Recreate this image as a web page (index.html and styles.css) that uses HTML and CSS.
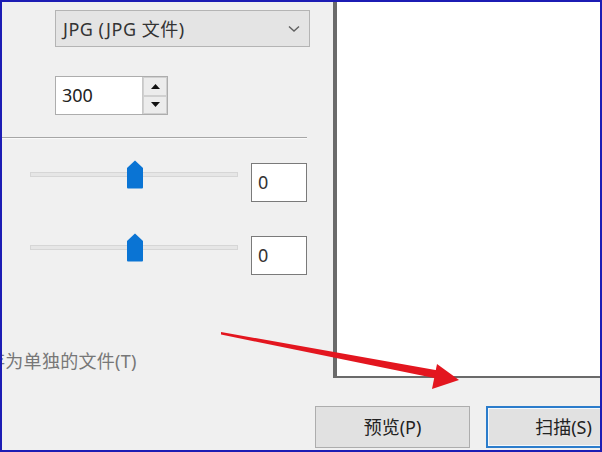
FILE: index.html
```html
<!DOCTYPE html>
<html lang="zh">
<head>
<meta charset="utf-8">
<title>扫描</title>
<link rel="stylesheet" href="styles.css">
</head>
<body>
<div class="window">
  <div class="panel">
    <div class="select">
      <span class="select-text">JPG (JPG 文件)</span>
      <svg class="chevron" width="12" height="8" viewBox="0 0 12 8"><path d="M1 1.5 L6 6 L11 1.5" fill="none" stroke="#606060" stroke-width="1.4"/></svg>
    </div>
    <div class="spin">
      <span class="spin-value">300</span>
      <div class="spin-buttons">
        <div class="spin-btn"><svg width="9" height="5" viewBox="0 0 9 5"><path d="M0 5 L4.5 0 L9 5 Z" fill="#111"/></svg></div>
        <div class="spin-btn"><svg width="9" height="5" viewBox="0 0 9 5"><path d="M0 0 L9 0 L4.5 5 Z" fill="#111"/></svg></div>
      </div>
    </div>
    <div class="separator"></div>
    <div class="slider-row first">
      <div class="slider">
        <div class="track"></div>
        <svg class="thumb" width="18" height="29" viewBox="0 0 18 29"><path d="M1 8 L9 0.5 L17 8 L17 27.5 Q17 28.5 16 28.5 L2 28.5 Q1 28.5 1 27.5 Z" fill="#0a74d4"/></svg>
      </div>
      <div class="num-box">0</div>
    </div>
    <div class="slider-row second">
      <div class="slider">
        <div class="track"></div>
        <svg class="thumb" width="18" height="29" viewBox="0 0 18 29"><path d="M1 8 L9 0.5 L17 8 L17 27.5 Q17 28.5 16 28.5 L2 28.5 Q1 28.5 1 27.5 Z" fill="#0a74d4"/></svg>
      </div>
      <div class="num-box">0</div>
    </div>
    <div class="check-label">存为单独的文件(T)</div>
  </div>
  <div class="preview"></div>
  <div class="buttons">
    <div class="btn">预览(P)</div>
    <div class="btn default">扫描(S)</div>
  </div>
  <svg class="arrow" width="602" height="452" viewBox="0 0 602 452">
    <path d="M221 332 L441 371 L439 379 L221 334.5 Z" fill="#e3161f"/>
    <path d="M459 380 L437 364 L432 389 Z" fill="#e3161f"/>
  </svg>
</div>
</body>
</html>
```
FILE: styles.css
```css
html, body {
  margin: 0;
  padding: 0;
  background: #f0f0f0;
}

.window {
  position: relative;
  width: 602px;
  height: 452px;
  box-sizing: border-box;
  border: 2px solid #1c1cb4;
  background: #f0f0f0;
  overflow: hidden;
  display: grid;
  grid-template-columns: 331px 1fr;
  grid-template-rows: 376px 1fr;
  font-family: "Noto Sans", "Noto Sans CJK SC", sans-serif;
  color: #2a2a2a;
}

.panel {
  display: flex;
  flex-direction: column;
  align-items: flex-start;
}

.select {
  margin: 8px 0 0 53px;
  width: 255px;
  height: 37px;
  box-sizing: border-box;
  border: 1px solid #b4b4b4;
  background: #e4e4e4;
  display: flex;
  align-items: center;
  justify-content: space-between;
  padding: 0 9px 0 7px;
}

.select-text {
  font-size: 18px;
  line-height: 20px;
  letter-spacing: 0.5px;
  color: #333;
}

.spin {
  margin: 29px 0 0 53px;
  width: 113px;
  height: 39px;
  box-sizing: border-box;
  border: 1px solid #adadad;
  background: #fff;
  display: flex;
}

.spin-value {
  flex: 1;
  font-size: 18px;
  line-height: 37px;
  padding-left: 6px;
  color: #222;
}

.spin-buttons {
  width: 24px;
  display: flex;
  flex-direction: column;
  background: #e9e9e9;
  border-left: 1px solid #c8c8c8;
}

.spin-btn {
  flex: 1;
  display: flex;
  align-items: center;
  justify-content: center;
  border: 1px solid #d0d0d0;
  background: #ececec;
}

.separator {
  margin-top: 22px;
  width: 305px;
  height: 1px;
  background: #a6a6a6;
  box-shadow: 0 1px 0 #fafafa;
}

.slider-row {
  display: flex;
  align-items: flex-start;
}

.slider-row.first {
  margin-top: 22px;
}

.slider-row.second {
  margin-top: 31px;
}

.slider {
  position: relative;
  margin-left: 28px;
  width: 208px;
  height: 29px;
}

.track {
  margin-top: 12px;
  height: 5px;
  box-sizing: border-box;
  background: #e6e6e6;
  border: 1px solid #d6d6d6;
}

.thumb {
  position: absolute;
  left: 96px;
  top: 0;
}

.num-box {
  margin: 3px 0 0 13px;
  width: 56px;
  height: 39px;
  box-sizing: border-box;
  border: 1px solid #7a7a7a;
  background: #fff;
  font-size: 18px;
  line-height: 37px;
  padding-left: 6px;
  color: #333;
}

.check-label {
  margin: 76px 0 0 -15px;
  font-size: 18px;
  line-height: 20px;
  letter-spacing: 0.3px;
  color: #777;
  white-space: nowrap;
}

.preview {
  background: #fff;
  border-left: 4px solid #6a6a6a;
  border-bottom: 2px solid #6a6a6a;
}

.buttons {
  grid-column: 1 / 3;
  display: flex;
  gap: 16px;
  padding: 28px 0 0 313px;
  white-space: nowrap;
}

.btn {
  flex: none;
  width: 155px;
  height: 42px;
  box-sizing: border-box;
  border: 1px solid #adadad;
  background: #e1e1e1;
  font-size: 18px;
  line-height: 40px;
  text-align: center;
  color: #222;
}

.btn.default {
  border: 2px solid #2b7ccb;
  line-height: 38px;
  box-shadow: inset 0 0 0 1px #f4f8fc;
}

.arrow {
  position: absolute;
  left: -2px;
  top: -2px;
  pointer-events: none;
}
```
